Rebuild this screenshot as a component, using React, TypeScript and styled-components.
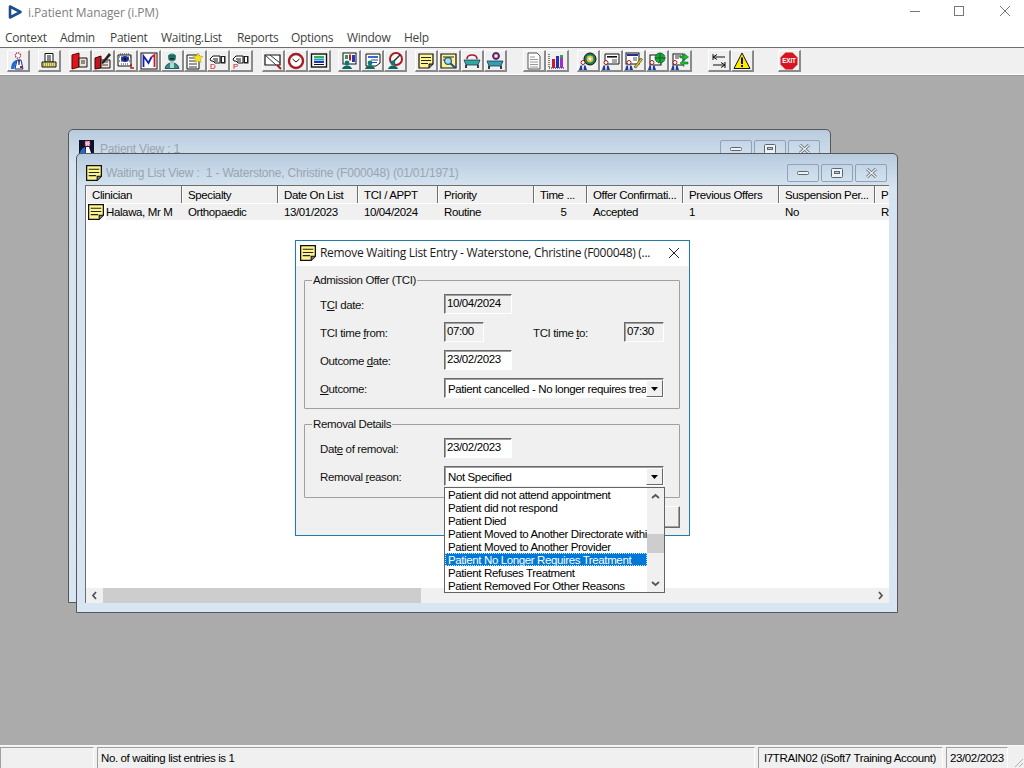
import React from 'react';
import styled, { createGlobalStyle } from 'styled-components';

const GlobalStyle = createGlobalStyle`
  html, body {
    margin: 0;
    padding: 0;
    overflow: hidden;
    background: #ababab;
  }
  * {
    box-sizing: border-box;
  }
`;

const classicFont = `"Liberation Sans", Arial, sans-serif`;
const systemFont = `"Open Sans", "Noto Sans", sans-serif`;

const Screen = styled.div`
  display: flex;
  flex-direction: column;
  width: 1024px;
  height: 768px;
  font-family: ${classicFont};
  font-size: 11.5px;
  letter-spacing: -0.38px;
  color: #000;
  overflow: hidden;
`;

const TitleBar = styled.div`
  display: flex;
  align-items: center;
  height: 24px;
  padding-left: 8px;
  background: #fff;
  font-family: ${systemFont};
  font-size: 12px;
  letter-spacing: -0.1px;
  color: #808080;
`;

const AppTitle = styled.span`
  margin-left: 6px;
  flex: 1;
`;

const CaptionGlyph = styled.div<{ $after: number }>`
  display: flex;
  margin: 0 ${(p) => p.$after}px 2px 0;
`;

const MenuBar = styled.div`
  display: flex;
  align-items: center;
  height: 23px;
  padding-left: 5px;
  background: #fff;
  font-family: ${systemFont};
  font-size: 12px;
  letter-spacing: -0.3px;
  color: #3f3f3f;
`;

const MenuItem = styled.span<{ $width: number }>`
  width: ${(p) => p.$width}px;
  padding-top: 3px;
`;

const ToolBar = styled.div`
  display: flex;
  height: 28px;
  padding: 2px 0 0 7px;
  background: #f0f0f0;
  border-top: 1px solid #6d6d6d;
  border-bottom: 1px solid #fff;
`;

const ToolGroup = styled.div<{ $gap: number }>`
  display: flex;
  margin-left: ${(p) => p.$gap}px;
`;

const ToolButton = styled.div`
  display: flex;
  align-items: center;
  justify-content: center;
  width: 23px;
  height: 22px;
  background: #f0f0f0;
  border-top: 1px solid #fff;
  border-left: 1px solid #fff;
  border-right: 2px solid #8a8a8a;
  border-bottom: 2px solid #8a8a8a;
`;

const Desktop = styled.div`
  position: relative;
  flex: 1;
  background: #ababab;
  border-top: 1px solid #9a9a9a;
`;

const MdiWindow = styled.div<{ $left: number; $top: number; $width: number; $height: number }>`
  position: absolute;
  left: ${(p) => p.$left}px;
  top: ${(p) => p.$top}px;
  width: ${(p) => p.$width}px;
  height: ${(p) => p.$height}px;
  display: flex;
  flex-direction: column;
  padding: 0 8px 9px;
  background: linear-gradient(#b8cbde 0, #d6e4f1 34px, #d8e5f2 100%);
  border: 1px solid #585858;
  border-radius: 5px 5px 0 0;
`;

const MdiTitle = styled.div`
  display: flex;
  align-items: center;
  flex-shrink: 0;
  height: 31px;
  padding: 6px 1px 0;
  font-size: 12px;
  letter-spacing: -0.2px;
  color: #98a5b2;
`;

const MdiTitleText = styled.span`
  flex: 1;
  margin-left: 4px;
  white-space: nowrap;
`;

const MdiButtons = styled.div`
  display: flex;
  gap: 2px;
  margin-right: 1px;
`;

const MdiButton = styled.div`
  display: flex;
  align-items: center;
  justify-content: center;
  width: 32px;
  height: 18px;
  border: 1px solid #8ea3b8;
  border-radius: 2px;
  background: linear-gradient(#c3d5e6, #d3e1ee);
`;

const ListPane = styled.div`
  display: flex;
  flex-direction: column;
  flex: 1;
  background: #fff;
  border-left: 1px solid #6e6e6e;
  border-top: 1px solid #6e6e6e;
  overflow: hidden;
`;

const columns = '96px 96px 80px 80px 96px 53px 96px 96px 96px 14px';

const ListHeader = styled.div`
  display: grid;
  grid-template-columns: ${columns};
  height: 18px;
  flex-shrink: 0;
  background: #f0f0f0;
  border-bottom: 1px solid #fff;
`;

const HeaderCell = styled.div`
  padding: 2px 0 0 5px;
  border-left: 1px solid #fff;
  border-right: 1px solid #6e6e6e;
  white-space: nowrap;
  overflow: hidden;
  line-height: 14px;
  &:last-child {
    border-right: 0;
  }
`;

const ListRow = styled.div`
  display: grid;
  grid-template-columns: ${columns};
  height: 16px;
  flex-shrink: 0;
  background: #f0f0f0;
  line-height: 16px;
`;

const RowCell = styled.div<{ $center?: boolean }>`
  padding-left: 6px;
  white-space: nowrap;
  overflow: hidden;
  text-align: ${(p) => (p.$center ? 'center' : 'left')};
`;

const ClinicianCell = styled.div`
  display: flex;
  white-space: nowrap;
`;

const RowIcon = styled.div`
  display: flex;
  align-items: center;
  justify-content: center;
  width: 20px;
  height: 16px;
  background: #fff;
`;

const ListBlank = styled.div`
  flex: 1;
  background: #fff;
`;

const HScroll = styled.div`
  display: flex;
  height: 15px;
  flex-shrink: 0;
  background: #f0f0f0;
`;

const HScrollArrow = styled.div`
  display: flex;
  align-items: center;
  justify-content: center;
  width: 17px;
`;

const HScrollThumb = styled.div<{ $width: number }>`
  width: ${(p) => p.$width}px;
  background: #cdcdcd;
`;

const HScrollTrack = styled.div`
  flex: 1;
`;

const Dialog = styled.div`
  position: absolute;
  left: 295px;
  top: 164px;
  width: 395px;
  height: 296px;
  display: flex;
  flex-direction: column;
  background: #f0f0f0;
  border: 1px solid #1b7bb3;
`;

const DialogTitle = styled.div`
  display: flex;
  align-items: center;
  flex-shrink: 0;
  height: 25px;
  padding: 0 0 2px 4px;
  background: #fff;
  font-family: ${systemFont};
  font-size: 12px;
  letter-spacing: -0.31px;
  color: #1a1a1a;
`;

const DialogTitleText = styled.span`
  flex: 1;
  margin-left: 4px;
  white-space: nowrap;
`;

const DialogClose = styled.div`
  display: flex;
  align-items: center;
  justify-content: center;
  width: 30px;
  height: 23px;
`;

const DialogBody = styled.div`
  display: flex;
  flex-direction: column;
  padding: 14px 9px 0 8px;
`;

const GroupBox = styled.div<{ $spaceTop?: number; $spaceBottom: number }>`
  position: relative;
  display: flex;
  flex-direction: column;
  gap: 8px;
  margin-top: ${(p) => p.$spaceTop ?? 0}px;
  padding: 13px 14px ${(p) => p.$spaceBottom}px 15px;
  border: 1px solid #a0a0a0;
  border-radius: 1px;
`;

const GroupLegend = styled.span`
  position: absolute;
  left: 7px;
  top: -7px;
  padding: 0 1px;
  line-height: 13px;
  background: #f0f0f0;
  color: #111;
`;

const FieldRow = styled.div`
  display: flex;
  align-items: center;
  height: 20px;
`;

const FieldLabel = styled.label<{ $width?: number }>`
  width: ${(p) => p.$width ?? 124}px;
  flex-shrink: 0;
  color: #111;
  padding-top: 1px;
`;

const TextField = styled.div<{ $width: number; $readOnly?: boolean }>`
  width: ${(p) => p.$width}px;
  height: 20px;
  padding: 1px 0 0 2px;
  line-height: 15px;
  background: ${(p) => (p.$readOnly ? '#f0f0f0' : '#fff')};
  border-top: 1px solid #6a6a6a;
  border-left: 1px solid #6a6a6a;
  border-right: 1px solid #fff;
  border-bottom: 1px solid #fff;
  box-shadow: inset 1px 1px 0 #a0a0a0;
`;

const TimeLabel = styled(FieldLabel)`
  margin-left: 49px;
`;

const Combo = styled.div`
  position: relative;
  display: flex;
  width: 220px;
  height: 20px;
  background: #fff;
  border-top: 1px solid #6a6a6a;
  border-left: 1px solid #6a6a6a;
  border-right: 1px solid #fff;
  border-bottom: 1px solid #fff;
  box-shadow: inset 1px 1px 0 #a0a0a0;
`;

const ComboText = styled.div`
  flex: 1;
  padding: 3px 0 0 3px;
  line-height: 15px;
  white-space: nowrap;
  overflow: hidden;
`;

const ComboButton = styled.div`
  display: flex;
  align-items: center;
  justify-content: center;
  width: 17px;
  height: 17px;
  margin-top: 1px;
  flex-shrink: 0;
  background: #f0f0f0;
  border-top: 1px solid #fff;
  border-left: 1px solid #fff;
  border-right: 1px solid #696969;
  border-bottom: 1px solid #696969;
`;

const DropList = styled.div`
  position: absolute;
  left: -1px;
  top: 20px;
  z-index: 5;
  display: flex;
  width: 221px;
  height: 106px;
  background: #fff;
  border: 1px solid #646464;
`;

const DropItems = styled.div`
  flex: 1;
  min-width: 0;
`;

const DropItem = styled.div<{ $selected?: boolean }>`
  height: 13px;
  padding-left: 3px;
  line-height: 15px;
  white-space: nowrap;
  overflow: hidden;
  background: ${(p) => (p.$selected ? '#0078d7' : 'transparent')};
  color: ${(p) => (p.$selected ? '#fff' : '#000')};
  outline: ${(p) => (p.$selected ? '1px dotted #cfe6fa' : 'none')};
  outline-offset: -1px;
`;

const DropScroll = styled.div`
  display: flex;
  flex-direction: column;
  width: 17px;
  background: #f0f0f0;
`;

const DropArrow = styled.div`
  display: flex;
  align-items: center;
  justify-content: center;
  height: 17px;
  flex-shrink: 0;
`;

const DropTrack = styled.div`
  flex: 1;
`;

const DropThumb = styled.div<{ $offset: number }>`
  height: 19px;
  margin-top: ${(p) => p.$offset}px;
  background: #cdcdcd;
`;

const DialogFooter = styled.div`
  display: flex;
  justify-content: flex-end;
  margin-top: 8px;
`;

const PushButton = styled.div`
  display: flex;
  align-items: center;
  justify-content: center;
  width: 76px;
  height: 22px;
  background: #f0f0f0;
  border-top: 1px solid #fff;
  border-left: 1px solid #fff;
  border-right: 1px solid #696969;
  border-bottom: 1px solid #696969;
  box-shadow: inset -1px -1px 0 #a0a0a0;
`;

const StatusBar = styled.div`
  display: flex;
  gap: 3px;
  height: 23px;
  padding-top: 1px;
  background: #f0f0f0;
  border-top: 1px solid #f8f8f8;
`;

const StatusPanel = styled.div<{ $width?: number; $pad?: number }>`
  ${(p) => (p.$width ? `width: ${p.$width}px;` : 'flex: 1;')}
  padding: 2px 0 0 ${(p) => p.$pad ?? 3}px;
  line-height: 16px;
  white-space: nowrap;
  border-top: 1px solid #a0a0a0;
  border-left: 1px solid #a0a0a0;
  border-right: 1px solid #fff;
`;

const Grip = styled.div`
  display: flex;
  align-items: flex-end;
  justify-content: flex-end;
  width: 13px;
`;

type SvgProps = { children: React.ReactNode; size?: number };

const Ico = ({ children, size = 18 }: SvgProps) => (
  <svg width={size} height={size} viewBox="0 0 18 18">
    {children}
  </svg>
);

// small staff figure used on the patient/clinician buttons
const Figure = ({ x = 0, y = 0 }: { x?: number; y?: number }) => (
  <g transform={`translate(${x} ${y})`}>
    <circle cx="4" cy="2.5" r="2" fill="#fff" stroke="#a01818" strokeWidth="1" />
    <path d="M0 10 L1.5 5.5 H6.5 L8 10 Z" fill="#1a3d9c" />
    <path d="M3 5.5 H5 L4.5 10 H3.5 Z" fill="#fff" />
  </g>
);

const TealFigure = () => (
  <g>
    <circle cx="7" cy="11" r="2.4" fill="#0b7a74" />
    <path d="M2 17 Q3 13.5 7 13.5 Q11 13.5 12 17 Z" fill="#0b6a66" />
  </g>
);

const Note = () => (
  <>
    <path d="M2 2 H16 V12 L12 16 H2 Z" fill="#fff58f" stroke="#111" strokeWidth="1.2" />
    <path d="M4 5.5 H14 M4 8.5 H14 M4 11.5 H11" stroke="#222" strokeWidth="1" />
    <path d="M12 16 V12 H16" fill="#777" stroke="#111" strokeWidth="1" />
  </>
);

const NoteIcon = () => (
  <svg width="16" height="16" viewBox="1.4 1.4 15.2 15.2">
    <Note />
  </svg>
);

const PatientIcon = () => (
  <Ico>
    <circle cx="9" cy="3.5" r="2.6" fill="#fff" stroke="#b01c3c" strokeWidth="1.3" strokeDasharray="1.2 0.8" />
    <path d="M2 17 Q2 10 7 8 H8 L5 17 Z" fill="#1c6fd0" />
    <path d="M6 17 L8 8 H12 L14 17 Z" fill="#fff" stroke="#1a2f8c" />
    <path d="M9 8 H11 L10.5 13 L9.5 13 Z" fill="#1a2f8c" />
    <rect x="11" y="14" width="2" height="2" fill="#c01830" />
  </Ico>
);

const PrinterIcon = () => (
  <Ico>
    <path d="M5 1.5 H13 V10 H5 Z" fill="#fff" stroke="#111" />
    <path d="M7 4 H11 M7 6 H11 M7 8 H11" stroke="#111" />
    <path d="M2 10 H16 V15 H2 Z" fill="#e8e070" stroke="#111" />
    <path d="M3 12 H15 M3 14 H15" stroke="#6a6a20" strokeDasharray="1 1" />
  </Ico>
);

const BookIcon = () => (
  <Ico>
    <path d="M1 3 L8 1 V15 L1 17 Z" fill="#e0141c" stroke="#600" />
    <path d="M8 6 H16 V15 H8 Z" fill="#e8e4d8" stroke="#111" />
    <path d="M10 9 H14 M10 11 H14" stroke="#333" />
  </Ico>
);

const PenBookIcon = () => (
  <Ico>
    <path d="M1 6 L7 4 V16 L1 17 Z" fill="#c01420" stroke="#400" />
    <path d="M7 8 H16 V16 H7 Z" fill="#f0e8e0" stroke="#111" />
    <path d="M8 10 H14 M8 13 H14" stroke="#532" />
    <path d="M7 11 L15 1 L17 3 L9 12 Z" fill="#222" />
  </Ico>
);

const EyeDocIcon = () => (
  <Ico>
    <path d="M1 3 H14 V14 H1 Z" fill="#fff" stroke="#111" />
    <path d="M3 2 H12 M2 5 H5 M11 5 H14 M2 9 H5 M12 9 H14 M4 12 H12" stroke="#333" strokeDasharray="1 1" />
    <ellipse cx="8" cy="7" rx="4" ry="3" fill="#1c2f9c" />
    <circle cx="8" cy="7" r="1.2" fill="#111" />
    <path d="M14 12 V16 H17" fill="none" stroke="#b01818" strokeWidth="1.4" />
  </Ico>
);

const MetricIcon = () => (
  <Ico>
    <rect x="1" y="1" width="16" height="16" fill="#fff" stroke="#111" />
    <path d="M3.5 15 V4 L8.5 11 L11.5 5" fill="none" stroke="#1420b0" strokeWidth="1.8" />
    <path d="M11.5 5 L14.5 3 V15" fill="none" stroke="#d01830" strokeWidth="1.8" />
  </Ico>
);

const SurgeonIcon = () => (
  <Ico>
    <circle cx="9" cy="5.5" r="4" fill="#2f8f80" />
    <rect x="5.5" y="3" width="7" height="2.5" fill="#1b6b60" />
    <rect x="6.5" y="6" width="5" height="1.6" fill="#222" />
    <path d="M2 16.5 Q3 11 9 11 Q15 11 16 16.5 Z" fill="#2f8f80" stroke="#124" strokeWidth="0.7" />
    <path d="M7 11 H11 V16 H7 Z" fill="#a9dcd0" />
  </Ico>
);

const NoteStarIcon = () => (
  <Ico>
    <path d="M1 3 H13 V17 H1 Z" fill="#fff" stroke="#111" />
    <path d="M3 6 H11 M3 9 H11 M3 12 H11 M3 15 H11" stroke="#333" />
    <path d="M12 1 L13.5 4 L17 4.5 L14.5 7 L15 10.5 L12 9 L9 10.5 L9.5 7 L7 4.5 L10.5 4 Z" fill="#f6e21c" stroke="#b09a10" strokeWidth="0.5" />
  </Ico>
);

const HandIcon = ({ letter }: { letter: string }) => (
  <Ico>
    <path d="M1 7 L4 4 H11 V11 H6 L4 9 H2 Z" fill="#fff" stroke="#111" />
    <path d="M4 7 H9 M5 9 H9" stroke="#111" />
    <rect x="11.5" y="4" width="5" height="7.5" fill="#222" />
    <rect x="13" y="5" width="2" height="5" fill="#fff" />
    <text x="1" y="17" fontFamily={classicFont} fontSize="8" fill="#c01020">
      {letter}
    </text>
  </Ico>
);

const EnvelopeIcon = () => (
  <Ico>
    <path d="M1 3 H16 V13 H1 Z" fill="#fff" stroke="#111" strokeWidth="1.2" />
    <path d="M1 3 L12 13 M6 3 L16 11" stroke="#333" />
    <path d="M13 13 L17 17" stroke="#b01818" strokeWidth="2" />
  </Ico>
);

const ClockIcon = () => (
  <Ico>
    <circle cx="9" cy="9" r="7" fill="#fff" stroke="#a81c24" strokeWidth="2.4" />
    <path d="M5.5 7 L9 10 L12.5 7" fill="none" stroke="#111" />
  </Ico>
);

const MonitorIcon = () => (
  <Ico>
    <rect x="1.5" y="2" width="15" height="13" fill="#fff" stroke="#111" strokeWidth="1.4" />
    <rect x="4" y="4" width="10" height="2" fill="#2db84c" />
    <rect x="4" y="6.5" width="10" height="2" fill="#22a0b8" />
    <rect x="4" y="9" width="10" height="2" fill="#2030c0" />
    <path d="M4 12.5 H14" stroke="#111" />
  </Ico>
);

const PersonChartIcon = () => (
  <Ico>
    <rect x="3" y="1" width="13" height="11" fill="#fff" stroke="#111" />
    <rect x="5" y="3" width="3" height="4" fill="#22a050" />
    <rect x="9" y="2.5" width="2" height="6" fill="#c81828" />
    <rect x="12" y="3" width="3" height="7" fill="#2838b0" />
    <TealFigure />
  </Ico>
);

const PersonFormIcon = () => (
  <Ico>
    <path d="M3 2 H17 V11 L13 14 H3 Z" fill="#fff" stroke="#111" />
    <rect x="5" y="4" width="10" height="2" fill="#3868c8" />
    <path d="M8 8 H15 M9 10.5 H14" stroke="#2848a8" />
    <TealFigure />
  </Ico>
);

const PersonNoIcon = () => (
  <Ico>
    <circle cx="10" cy="7" r="6" fill="#fff" stroke="#a81c24" strokeWidth="2" />
    <path d="M6 11 L14 3" stroke="#333" strokeWidth="1.6" />
    <TealFigure />
  </Ico>
);

const NoteMagnifyIcon = () => (
  <Ico>
    <path d="M1 2 H16 V16 H1 Z" fill="#fff58f" stroke="#111" strokeWidth="1.2" />
    <path d="M3 5 H14 M3 8 H7" stroke="#222" />
    <circle cx="8" cy="9" r="3.4" fill="#a8dcec" stroke="#1a5a90" strokeWidth="1.2" />
    <path d="M10.5 11.5 L15 15.5" stroke="#1a4a90" strokeWidth="2" />
  </Ico>
);

const BedIcon = () => (
  <Ico>
    <path d="M4 7 Q4 3 9 3 Q14 3 14 7" fill="none" stroke="#a02030" strokeWidth="1.6" />
    <path d="M1 8 H17 L15 13 H3 Z" fill="#30a8a0" stroke="#124" strokeWidth="0.7" />
    <path d="M3 13 V16 M15 13 V16" stroke="#111" strokeWidth="1.6" />
  </Ico>
);

const BedPersonIcon = () => (
  <Ico>
    <circle cx="10" cy="4" r="3.4" fill="#a02050" stroke="#1a2a80" />
    <rect x="8.5" y="2.5" width="3" height="3" fill="#fff" />
    <path d="M1 9 H17 L15 14 H3 Z" fill="#30a0b0" stroke="#124" strokeWidth="0.7" />
    <path d="M3 14 V17 M15 14 V17" stroke="#111" strokeWidth="1.6" />
  </Ico>
);

const DocIcon = () => (
  <Ico>
    <path d="M3 1 H12 L15 4 V17 H3 Z" fill="#fff" stroke="#555" />
    <path d="M5 5 H10 M5 7.5 H13 M5 10 H13 M5 12.5 H13 M5 15 H13" stroke="#999" />
  </Ico>
);

const BarsIcon = () => (
  <Ico>
    <path d="M1 2 V16 H17" fill="none" stroke="#111" strokeDasharray="1 1" />
    <rect x="4" y="7" width="3" height="9" fill="#d01828" />
    <rect x="8" y="4" width="3" height="12" fill="#2030c0" />
    <rect x="12" y="6" width="3" height="10" fill="#a030c0" />
    <rect x="12" y="3" width="3" height="3" fill="#30a050" />
  </Ico>
);

const PersonDiscIcon = () => (
  <Ico>
    <circle cx="11" cy="7" r="6" fill="#1c7a58" stroke="#111" />
    <circle cx="11" cy="7" r="3.4" fill="#d8c848" />
    <circle cx="11" cy="7" r="1.4" fill="#fff" />
    <Figure x={0} y={8} />
  </Ico>
);

const PersonSlipIcon = () => (
  <Ico>
    <path d="M3 2 H17 V12 H3 Z" fill="#fff" stroke="#111" />
    <rect x="5" y="4" width="10" height="1.6" fill="#111" />
    <path d="M10 8 H15 M10 10 H15" stroke="#555" />
    <Figure x={0} y={8} />
  </Ico>
);

const PersonPenIcon = () => (
  <Ico>
    <rect x="1" y="1" width="13" height="11" fill="#fff" stroke="#111" />
    <rect x="2" y="2" width="11" height="2" fill="#203090" />
    <path d="M8 6 H12 M8 8 H12" stroke="#555" />
    <path d="M9 15 L16 6 L17.5 7.5 L11 16 Z" fill="#d8c020" stroke="#111" strokeWidth="0.5" />
    <Figure x={0} y={8} />
  </Ico>
);

const PersonGlobeIcon = () => (
  <Ico>
    <rect x="2" y="3" width="11" height="10" fill="#fff" stroke="#111" />
    <circle cx="12" cy="6" r="5" fill="#18a838" stroke="#0a5018" strokeDasharray="1.5 0.6" />
    <path d="M7 6 H17 M12 1 V11" stroke="#0a6020" />
    <Figure x={0} y={8} />
  </Ico>
);

const PersonArrowsIcon = () => (
  <Ico>
    <rect x="2" y="2" width="10" height="11" fill="#fff" stroke="#111" />
    <path d="M4 4 H10 M4 6 H8" stroke="#333" />
    <path d="M9 4 H13 V1.5 L17.5 5 L13 8.5 V6 H9 Z" fill="#18c038" stroke="#0a5018" strokeWidth="0.5" />
    <path d="M17 10 H13 V7.5 L9 11 L13 14.5 V12 H17 Z" fill="#18c038" stroke="#0a5018" strokeWidth="0.5" />
    <Figure x={0} y={8} />
  </Ico>
);

const SwapIcon = () => (
  <Ico>
    <path d="M3 2 V8 M3 5 H15 M3 5 L7 2.5 M3 5 L7 7.5" fill="none" stroke="#111" />
    <path d="M15 10 V16 M3 13 H15 M15 13 L11 10.5 M15 13 L11 15.5" fill="none" stroke="#111" />
  </Ico>
);

const WarningIcon = () => (
  <Ico>
    <path d="M9 1 L17 16.5 H1 Z" fill="#ffec00" stroke="#111" />
    <rect x="8" y="5.5" width="2" height="6.5" fill="#111" />
    <rect x="8" y="13" width="2" height="2" fill="#111" />
  </Ico>
);

const ExitIcon = () => (
  <Ico>
    <path d="M5.5 0.5 H12.5 L17.5 5.5 V12.5 L12.5 17.5 H5.5 L0.5 12.5 V5.5 Z" fill="#d81420" />
    <text x="9" y="11.2" textAnchor="middle" fontFamily={classicFont} fontSize="6.4" letterSpacing="-0.2" fontWeight="700" fill="#fff">
      EXIT
    </text>
  </Ico>
);

const WindowPatientIcon = () => (
  <Ico>
    <rect x="1" y="0" width="15" height="16" fill="#10122c" />
    <rect x="7" y="1" width="5" height="5" fill="#e8c0d0" stroke="#b01c3c" strokeDasharray="1 1" />
    <path d="M1 16 Q2 9 7 7 L8 16 Z" fill="#1c6fd0" />
    <path d="M8 7 H11 L14 16 H8 Z" fill="#fff" />
  </Ico>
);

const AppLogo = () => (
  <svg width="14" height="14" viewBox="0 0 14 14">
    <path d="M2 1.5 L12.5 7 L2 12.5 Z" fill="#fff" stroke="#1c4f8e" strokeWidth="2.6" strokeLinejoin="round" />
  </svg>
);

const Chevron = ({ dir }: { dir: 'left' | 'right' | 'up' | 'down' }) => {
  const points = {
    left: 'M6 1 L3 4.5 L6 8',
    right: 'M3 1 L6 4.5 L3 8',
    up: 'M1 6 L4.5 3 L8 6',
    down: 'M1 3 L4.5 6 L8 3',
  }[dir];
  return (
    <svg width="9" height="9" viewBox="0 0 9 9">
      <path d={points} fill="none" stroke="#555" strokeWidth="1.8" />
    </svg>
  );
};

const ComboArrow = () => (
  <svg width="7" height="4" viewBox="0 0 7 4">
    <path d="M0 0 H7 L3.5 4 Z" fill="#000" />
  </svg>
);

const MdiControls = () => (
  <MdiButtons>
    <MdiButton>
      <svg width="12" height="6" viewBox="0 0 12 6">
        <rect x="0.5" y="1.5" width="11" height="3" rx="1" fill="#eef3f8" stroke="#5d6670" />
      </svg>
    </MdiButton>
    <MdiButton>
      <svg width="12" height="10" viewBox="0 0 12 10">
        <rect x="0.5" y="0.5" width="11" height="9" rx="1" fill="#eef3f8" stroke="#5d6670" />
        <rect x="3.5" y="3.5" width="5" height="2" fill="#b8cbde" stroke="#5d6670" />
      </svg>
    </MdiButton>
    <MdiButton>
      <svg width="13" height="10" viewBox="0 0 13 10">
        <path d="M2 1 L11 9 M11 1 L2 9" stroke="#68717a" strokeWidth="3" />
        <path d="M2 1 L11 9 M11 1 L2 9" stroke="#eef3f8" strokeWidth="1.2" />
      </svg>
    </MdiButton>
  </MdiButtons>
);

const toolGroups: { gap: number; icons: React.FC[] }[] = [
  { gap: 0, icons: [PatientIcon] },
  { gap: 8, icons: [PrinterIcon] },
  {
    gap: 8,
    icons: [
      BookIcon,
      PenBookIcon,
      EyeDocIcon,
      MetricIcon,
      SurgeonIcon,
      NoteStarIcon,
      () => <HandIcon letter="D" />,
      () => <HandIcon letter="P" />,
    ],
  },
  { gap: 9, icons: [EnvelopeIcon, ClockIcon, MonitorIcon] },
  { gap: 7, icons: [PersonChartIcon, PersonFormIcon, PersonNoIcon] },
  {
    gap: 8,
    icons: [() => <Ico><Note /></Ico>, NoteMagnifyIcon, BedIcon, BedPersonIcon],
  },
  { gap: 16, icons: [DocIcon, BarsIcon] },
  { gap: 8, icons: [PersonDiscIcon, PersonSlipIcon, PersonPenIcon, PersonGlobeIcon, PersonArrowsIcon] },
  { gap: 16, icons: [SwapIcon, WarningIcon] },
  { gap: 24, icons: [ExitIcon] },
];

const menus: [string, number][] = [
  ['Context', 55],
  ['Admin', 50],
  ['Patient', 51],
  ['Waiting.List', 76],
  ['Reports', 54],
  ['Options', 56],
  ['Window', 57],
  ['Help', 40],
];

const headers = [
  'Clinician',
  'Specialty',
  'Date On List',
  'TCI / APPT',
  'Priority',
  'Time ...',
  'Offer Confirmati...',
  'Previous Offers',
  'Suspension Per...',
  'P',
];

const removalReasons = [
  'Patient did not attend appointment',
  'Patient did not respond',
  'Patient Died',
  'Patient Moved to Another Directorate within Trust',
  'Patient Moved to Another Provider',
  'Patient No Longer Requires Treatment',
  'Patient Refuses Treatment',
  'Patient Removed For Other Reasons',
];

const App = () => {
  return (
    <Screen>
      <GlobalStyle />
      <TitleBar>
        <AppLogo />
        <AppTitle>i.Patient Manager (i.PM)</AppTitle>
        <CaptionGlyph $after={34}>
          <svg width="10" height="10" viewBox="0 0 10 10">
            <path d="M0 5.5 H10" stroke="#777" />
          </svg>
        </CaptionGlyph>
        <CaptionGlyph $after={36}>
          <svg width="10" height="10" viewBox="0 0 10 10">
            <rect x="0.5" y="0.5" width="9" height="9" fill="none" stroke="#777" />
          </svg>
        </CaptionGlyph>
        <CaptionGlyph $after={14}>
          <svg width="10" height="10" viewBox="0 0 10 10">
            <path d="M0 0 L10 10 M10 0 L0 10" stroke="#777" />
          </svg>
        </CaptionGlyph>
      </TitleBar>
      <MenuBar>
        {menus.map(([name, width]) => (
          <MenuItem key={name} $width={width}>
            {name}
          </MenuItem>
        ))}
      </MenuBar>
      <ToolBar>
        {toolGroups.map((group, i) => (
          <ToolGroup key={i} $gap={group.gap}>
            {group.icons.map((Icon, j) => (
              <ToolButton key={j}>
                <Icon />
              </ToolButton>
            ))}
          </ToolGroup>
        ))}
      </ToolBar>
      <Desktop>
        <MdiWindow $left={68} $top={53} $width={763} $height={474}>
          <MdiTitle>
            <WindowPatientIcon />
            <MdiTitleText>Patient View : 1</MdiTitleText>
            <MdiControls />
          </MdiTitle>
        </MdiWindow>
        <MdiWindow $left={76} $top={77} $width={822} $height={460}>
          <MdiTitle>
            <NoteIcon />
            <MdiTitleText>Waiting List View :&nbsp; 1 - Waterstone, Christine (F000048) (01/01/1971)</MdiTitleText>
            <MdiControls />
          </MdiTitle>
          <ListPane>
            <ListHeader>
              {headers.map((h) => (
                <HeaderCell key={h}>{h}</HeaderCell>
              ))}
            </ListHeader>
            <ListRow>
              <ClinicianCell>
                <RowIcon>
                  <NoteIcon />
                </RowIcon>
                Halawa, Mr M
              </ClinicianCell>
              <RowCell>Orthopaedic</RowCell>
              <RowCell>13/01/2023</RowCell>
              <RowCell>10/04/2024</RowCell>
              <RowCell>Routine</RowCell>
              <RowCell $center>5</RowCell>
              <RowCell>Accepted</RowCell>
              <RowCell>1</RowCell>
              <RowCell>No</RowCell>
              <RowCell>R</RowCell>
            </ListRow>
            <ListBlank />
            <HScroll>
              <HScrollArrow>
                <Chevron dir="left" />
              </HScrollArrow>
              <HScrollThumb $width={318} />
              <HScrollTrack />
              <HScrollArrow>
                <Chevron dir="right" />
              </HScrollArrow>
            </HScroll>
          </ListPane>
        </MdiWindow>
        <Dialog>
          <DialogTitle>
            <NoteIcon />
            <DialogTitleText>Remove Waiting List Entry - Waterstone, Christine (F000048) (...</DialogTitleText>
            <DialogClose>
              <svg width="10" height="10" viewBox="0 0 10 10">
                <path d="M0 0 L10 10 M10 0 L0 10" stroke="#222" />
              </svg>
            </DialogClose>
          </DialogTitle>
          <DialogBody>
            <GroupBox $spaceBottom={10}>
              <GroupLegend>Admission Offer (TCI)</GroupLegend>
              <FieldRow>
                <FieldLabel>
                  T<u>C</u>I date:
                </FieldLabel>
                <TextField $width={68} $readOnly>
                  10/04/2024
                </TextField>
              </FieldRow>
              <FieldRow>
                <FieldLabel>
                  TCI time <u>f</u>rom:
                </FieldLabel>
                <TextField $width={40} $readOnly>
                  07:00
                </TextField>
                <TimeLabel $width={91}>
                  TCI time <u>t</u>o:
                </TimeLabel>
                <TextField $width={40} $readOnly>
                  07:30
                </TextField>
              </FieldRow>
              <FieldRow>
                <FieldLabel>
                  Outcome <u>d</u>ate:
                </FieldLabel>
                <TextField $width={68}>23/02/2023</TextField>
              </FieldRow>
              <FieldRow>
                <FieldLabel>
                  <u>O</u>utcome:
                </FieldLabel>
                <Combo>
                  <ComboText>Patient cancelled - No longer requires treatment</ComboText>
                  <ComboButton>
                    <ComboArrow />
                  </ComboButton>
                </Combo>
              </FieldRow>
            </GroupBox>
            <GroupBox $spaceTop={15} $spaceBottom={11}>
              <GroupLegend>Removal Details</GroupLegend>
              <FieldRow>
                <FieldLabel>
                  Dat<u>e</u> of removal:
                </FieldLabel>
                <TextField $width={68}>23/02/2023</TextField>
              </FieldRow>
              <FieldRow>
                <FieldLabel>
                  Removal <u>r</u>eason:
                </FieldLabel>
                <Combo>
                  <ComboText>Not Specified</ComboText>
                  <ComboButton>
                    <ComboArrow />
                  </ComboButton>
                  <DropList>
                    <DropItems>
                      {removalReasons.map((reason) => (
                        <DropItem key={reason} $selected={reason === 'Patient No Longer Requires Treatment'}>
                          {reason}
                        </DropItem>
                      ))}
                    </DropItems>
                    <DropScroll>
                      <DropArrow>
                        <Chevron dir="up" />
                      </DropArrow>
                      <DropTrack>
                        <DropThumb $offset={29} />
                      </DropTrack>
                      <DropArrow>
                        <Chevron dir="down" />
                      </DropArrow>
                    </DropScroll>
                  </DropList>
                </Combo>
              </FieldRow>
            </GroupBox>
            <DialogFooter>
              <PushButton>Cancel</PushButton>
            </DialogFooter>
          </DialogBody>
        </Dialog>
      </Desktop>
      <StatusBar>
        <StatusPanel $width={94} />
        <StatusPanel>No. of waiting list entries is 1</StatusPanel>
        <StatusPanel $width={185} $pad={5}>
          I7TRAIN02 (iSoft7 Training Account)
        </StatusPanel>
        <StatusPanel $width={62}>23/02/2023</StatusPanel>
        <Grip>
          <svg width="12" height="12" viewBox="0 0 12 12">
            <path d="M11 3 L3 11 M11 7 L7 11" stroke="#b0b0b0" />
          </svg>
        </Grip>
      </StatusBar>
    </Screen>
  );
};

export default App;
